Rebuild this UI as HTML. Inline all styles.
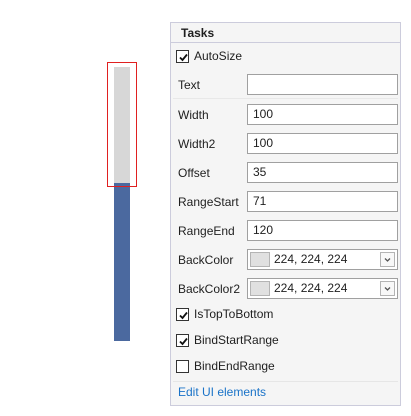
<!DOCTYPE html>
<html><head><meta charset="utf-8"><style>
*{margin:0;padding:0;box-sizing:border-box}
body{width:411px;height:416px;background:#fff;position:relative;overflow:hidden;font-family:"Segoe UI","Liberation Sans",sans-serif;font-size:12px;color:#1e1e1e}
.a{position:absolute}
.panel{left:170px;top:22px;width:231px;height:384px;background:#f5f5f5;border:1px solid #ccccdc}
.hdr{left:171px;top:23px;width:229px;height:20px;border-bottom:1px solid #ccccdc;background:#f5f5f5}
.lbl{left:178px;line-height:16px}
.inp{left:247px;width:151px;height:21px;background:#fff;border:1px solid #a0a0a0;padding-left:5px;line-height:19px}
.cb{left:176px;width:13px;height:13px;border:1px solid #333;background:#fff}
.cb svg{position:absolute;left:1px;top:1px}
.sw{position:absolute;left:2px;top:2px;width:20px;height:15px;background:#e0e0e0;border:1px solid #b4b4b4}
.dd{position:absolute;right:2px;top:2px;width:15px;height:15px;border:1px solid #b4b4b4;background:#f8f8f8}
</style></head><body>
<div class="a" style="left:114px;top:67px;width:16px;height:116px;background:#d7d7d7"></div>
<div class="a" style="left:114px;top:183px;width:16px;height:158px;background:#4b699f"></div>
<div class="a" style="left:107px;top:62px;width:30px;height:125px;border:1px solid #e02020"></div>
<div class="a panel"></div>
<div class="a hdr"></div>
<div class="a" style="left:181px;top:25px;font-weight:bold;line-height:16px">Tasks</div>

<div class="a cb" style="top:50px"><svg width="11" height="11" viewBox="0 0 11 11"><path d="M2 5.5L4.5 8L9 2.5" stroke="#111" stroke-width="1.8" fill="none"/></svg></div>
<div class="a" style="left:194px;top:48px;line-height:16px">AutoSize</div>

<div class="a lbl" style="top:77px">Text</div>
<div class="a inp" style="top:74px"></div>
<div class="a" style="left:173px;top:98px;width:225px;height:1px;background:#e8e8e8"></div>
<div class="a lbl" style="top:107px">Width</div><div class="a inp" style="top:104px">100</div>
<div class="a lbl" style="top:136px">Width2</div><div class="a inp" style="top:133px">100</div>
<div class="a lbl" style="top:165px">Offset</div><div class="a inp" style="top:162px">35</div>
<div class="a lbl" style="top:194px">RangeStart</div><div class="a inp" style="top:191px">71</div>
<div class="a lbl" style="top:223px">RangeEnd</div><div class="a inp" style="top:220px">120</div>
<div class="a lbl" style="top:252px">BackColor</div>
<div class="a inp" style="top:249px;padding-left:26px">224, 224, 224<div class="sw"></div><div class="dd"><svg width="13" height="13" viewBox="0 0 13 13"><path d="M4 5.5L6.5 8L9 5.5" stroke="#555" stroke-width="1.3" fill="none"/></svg></div></div>
<div class="a lbl" style="top:281px">BackColor2</div>
<div class="a inp" style="top:278px;padding-left:26px">224, 224, 224<div class="sw"></div><div class="dd"><svg width="13" height="13" viewBox="0 0 13 13"><path d="M4 5.5L6.5 8L9 5.5" stroke="#555" stroke-width="1.3" fill="none"/></svg></div></div>

<div class="a cb" style="top:308px"><svg width="11" height="11" viewBox="0 0 11 11"><path d="M2 5.5L4.5 8L9 2.5" stroke="#111" stroke-width="1.8" fill="none"/></svg></div>
<div class="a" style="left:194px;top:306px;line-height:16px">IsTopToBottom</div>
<div class="a cb" style="top:334px"><svg width="11" height="11" viewBox="0 0 11 11"><path d="M2 5.5L4.5 8L9 2.5" stroke="#111" stroke-width="1.8" fill="none"/></svg></div>
<div class="a" style="left:194px;top:332px;line-height:16px">BindStartRange</div>
<div class="a cb" style="top:360px"></div>
<div class="a" style="left:194px;top:358px;line-height:16px">BindEndRange</div>
<div class="a" style="left:173px;top:381px;width:225px;height:1px;background:#e6e6e6"></div>
<div class="a" style="left:178px;top:384px;line-height:16px;color:#1a73c8">Edit UI elements</div>
</body></html>
